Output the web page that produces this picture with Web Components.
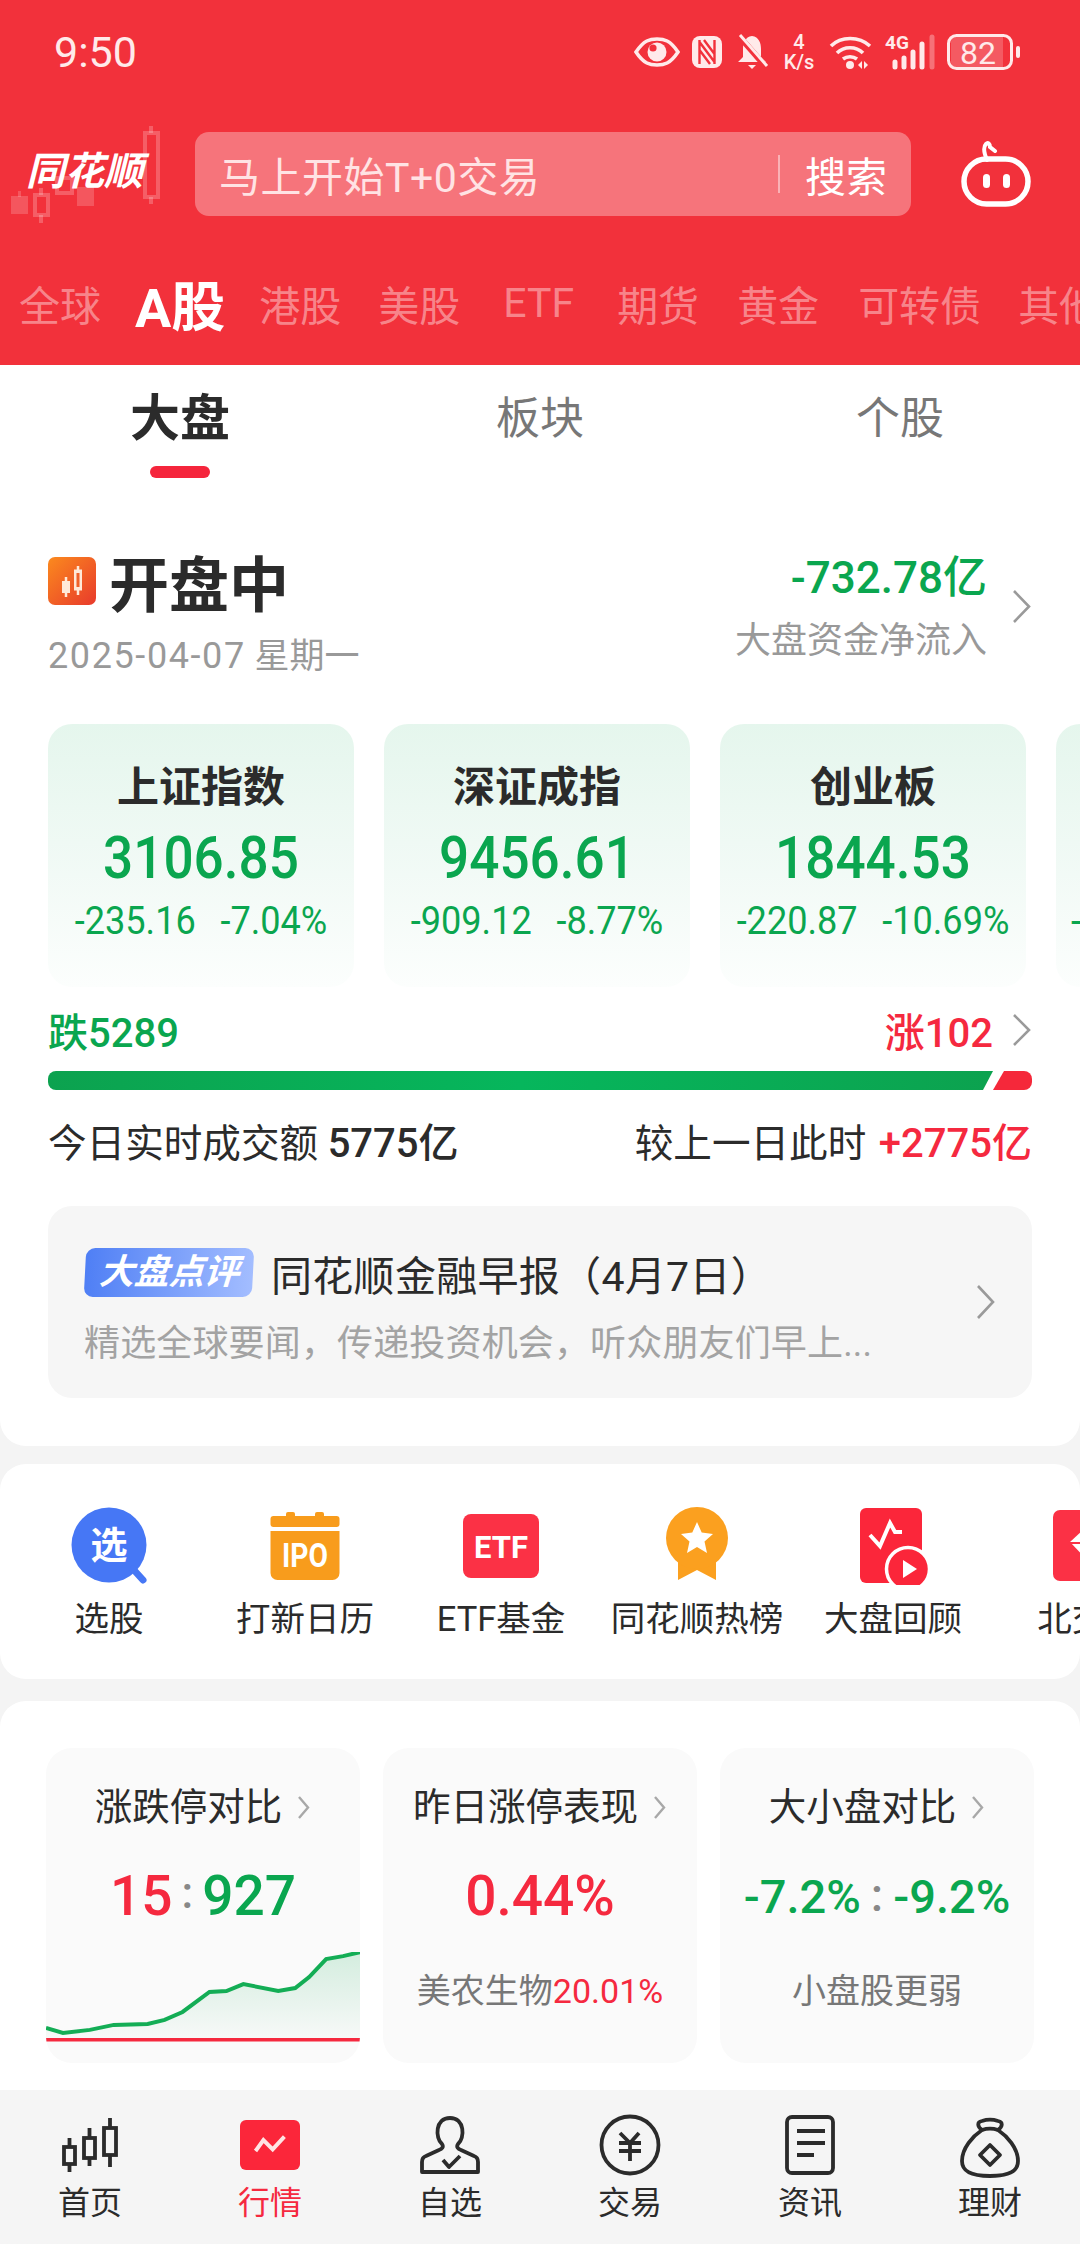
<!DOCTYPE html>
<html lang="zh">
<head>
<meta charset="utf-8">
<title>行情</title>
<style>
  html, body { margin: 0; padding: 0; }
  body {
    width: 1080px;
    height: 2244px;
    overflow: hidden;
    background: #f4f4f4;
    font-family: Roboto, "Noto Sans CJK SC", sans-serif;
    color: #2b2b2b;
    display: flex;
    flex-direction: column;
  }
  #gap1 { height: 18px; flex: none; }
  #gap2 { height: 22px; flex: none; }
</style>
</head>
<body>
  <ths-header></ths-header>
  <ths-panel style="--radius: 0 0 26px 26px; --pad: 0 48px 48px">
    <ths-seg-tabs></ths-seg-tabs>
    <ths-market-head></ths-market-head>
    <ths-index-row>
      <ths-index-card name="上证指数" value="3106.85" change="-235.16" pct="-7.04%"></ths-index-card>
      <ths-index-card name="深证成指" value="9456.61" change="-909.12" pct="-8.77%"></ths-index-card>
      <ths-index-card name="创业板" value="1844.53" change="-220.87" pct="-10.69%"></ths-index-card>
      <ths-index-card change="-" clipped></ths-index-card>
    </ths-index-row>
    <ths-breadth></ths-breadth>
    <ths-news-card></ths-news-card>
  </ths-panel>
  <div id="gap1"></div>
  <ths-panel style="--radius: 26px; --pad: 41px 0 38px">
    <ths-shortcuts></ths-shortcuts>
  </ths-panel>
  <div id="gap2"></div>
  <ths-panel style="--radius: 26px 26px 0 0; --pad: 47px 46px 0; --grow: 1">
    <ths-stat-row>
      <ths-stat-card label="涨跌停对比" chart>
        <span slot="value" style="color:#f5293f">15</span>
        <span slot="value" style="color:#888;font-size:44px;margin:0 9px 6px">:</span>
        <span slot="value" style="color:#0aa64f">927</span>
      </ths-stat-card>
      <ths-stat-card label="昨日涨停表现">
        <span slot="value" style="color:#f5293f">0.44%</span>
        <span slot="sub">美农生物<span style="color:#f5293f">20.01%</span></span>
      </ths-stat-card>
      <ths-stat-card label="大小盘对比" small>
        <span slot="value" style="color:#0aa64f">-7.2%</span>
        <span slot="value" style="color:#888;margin:0 10px 4px">:</span>
        <span slot="value" style="color:#0aa64f">-9.2%</span>
        <span slot="sub">小盘股更弱</span>
      </ths-stat-card>
    </ths-stat-row>
  </ths-panel>
  <ths-bottom-nav></ths-bottom-nav>

<script>
const RED = '#f5293f';
const GREEN = '#0aa64f';

function chevron(w, h, color = '#9a9a9a', sw = 2.6) {
  return `<svg width="${w}" height="${h}" viewBox="0 0 ${w} ${h}" style="display:block;flex:none" fill="none">
    <path d="M2 2 L${w - 3} ${h / 2} L2 ${h - 2}" stroke="${color}" stroke-width="${sw}"/></svg>`;
}

class ThsHeader extends HTMLElement {
  constructor() {
    super();
    this.attachShadow({ mode: 'open' });
    const ink = '#ffeaea';
    this.shadowRoot.innerHTML = `
    <style>
      :host { display: block; flex: none; height: 365px; background: #f2313b; color: #fff; overflow: hidden; }
      .status { height: 104px; display: flex; align-items: center; padding: 0 60px 0 54px; }
      .time { font-size: 43px; color: #ffeaea; flex: 1; }
      .icons { display: flex; align-items: center; }
      .icons svg { display: block; flex: none; overflow: visible; }
      .top { height: 111px; margin-top: 14px; display: flex; align-items: center; }
      .logo { width: 195px; height: 111px; position: relative; flex: none; }
      .logo svg { position: absolute; left: 0; top: 0; }
      .logo b {
        position: absolute; left: 26px; top: 29px; font-size: 39px; line-height: 50px;
        font-style: italic; font-weight: 700; white-space: nowrap; color: #fff;
      }
      .search {
        width: 716px; height: 84px; border-radius: 14px; background: rgba(255,255,255,.33);
        display: flex; align-items: center; padding: 0 24px; box-sizing: border-box; font-size: 41px; flex: none;
      }
      .hint { flex: 1; color: #ffe3e4; white-space: nowrap; letter-spacing: .5px; }
      .bar { width: 2px; height: 38px; background: rgba(255,255,255,.45); margin-right: 25px; }
      .go { color: #fff; white-space: nowrap; }
      .robot { margin-left: 50px; flex: none; display: block; }
      .tabs { display: flex; align-items: center; height: 86px; margin-top: 31px; font-size: 41px; color: rgba(255,255,255,.42); white-space: nowrap; }
      .tabs span { flex: none; }
      .tabs .on { color: #fff; font-weight: 700; font-size: 54px; }
    </style>
    <div class="status">
      <div class="time">9:50</div>
      <div class="icons">
        <svg width="46" height="30" viewBox="0 0 46 30" style="margin-right:12px">
          <path d="M2 15 C10 3 16 2 23 2 C30 2 36 3 44 15 C36 27 30 28 23 28 C16 28 10 27 2 15Z" fill="none" stroke="${ink}" stroke-width="3.6"/>
          <circle cx="23" cy="15" r="9.5" fill="${ink}"/>
          <circle cx="19" cy="11" r="3.6" fill="#f2313b"/>
        </svg>
        <svg width="30" height="32" viewBox="0 0 30 32" style="margin-right:14px">
          <rect width="30" height="32" rx="8" fill="${ink}"/>
          <path d="M7.5 4 V28 M22.5 4 V28 M7.5 6 L22.5 26 M7.5 14 L18 28 M12 4 L22.5 18" stroke="#f2313b" stroke-width="2.4" fill="none"/>
        </svg>
        <svg width="32" height="36" viewBox="0 0 32 36" style="margin-right:14px">
          <path d="M16 2 C23 3 25 9 25 15 V23 L30 28 H2 L7 23 V15 C7 9 9 3 16 2Z" fill="${ink}"/>
          <path d="M12 31 H20 L16 35Z" fill="${ink}"/>
          <path d="M3 2 L30 33" stroke="#f2313b" stroke-width="6"/>
          <path d="M4 1 L31 32" stroke="${ink}" stroke-width="3"/>
        </svg>
        <svg width="34" height="38" viewBox="0 0 34 38" style="margin-right:13px">
          <text x="17" y="16" text-anchor="middle" font-size="20" font-weight="500" font-family="Roboto" fill="${ink}">4</text>
          <text x="17" y="36" text-anchor="middle" font-size="20" font-weight="500" font-family="Roboto" fill="${ink}">K/s</text>
        </svg>
        <svg width="44" height="34" viewBox="0 0 44 34" style="margin-right:12px">
          <g fill="none" stroke="${ink}" stroke-width="3.6">
            <path d="M2 11 C12 1 30 1 41 11"/>
            <path d="M8 18 C15 11 27 11 34 18"/>
            <path d="M14 24 C18 21 24 21 28 24"/>
          </g>
          <circle cx="21" cy="30" r="4" fill="${ink}"/>
          <path d="M33 26 V34 L29 30Z M35 26 V34 L39 30Z" fill="${ink}"/>
        </svg>
        <svg width="50" height="36" viewBox="0 0 50 36" style="margin-right:12px">
          <text x="0" y="15" font-size="19" font-weight="700" font-family="Roboto" fill="${ink}">4G</text>
          <g stroke="${ink}" stroke-width="5" stroke-linecap="round">
            <path d="M10 28 V33 M19 24 V33 M28 18 V33 M37 10 V33"/>
            <path d="M47 3 V33" stroke-opacity=".35"/>
          </g>
        </svg>
        <svg width="73" height="36" viewBox="0 0 73 36">
          <rect x="1.5" y="1.5" width="63" height="33" rx="8" fill="none" stroke="${ink}" stroke-width="3"/>
          <path d="M4 8 a5 5 0 0 1 5 -5 H56 V33 H9 a5 5 0 0 1 -5 -5Z" fill="#fff" fill-opacity=".2"/>
          <text x="31" y="29.500" text-anchor="middle" font-size="32" font-family="Roboto" fill="${ink}">82</text>
          <rect x="69" y="12" width="4" height="12" rx="2" fill="${ink}"/>
        </svg>
      </div>
    </div>
    <div class="top">
      <div class="logo">
        <svg width="195" height="111" viewBox="0 0 195 111" fill="none">
          <g stroke="#fff" stroke-opacity=".22" stroke-width="4">
            <rect x="145" y="15" width="13" height="64"/>
            <path d="M151 8 V15 M151 79 V86"/>
            <rect x="35" y="77" width="13" height="20"/>
            <path d="M41 70 V77 M41 97 V105"/>
            <rect x="57" y="60" width="15" height="15"/>
          </g>
          <g fill="#fff" fill-opacity=".18">
            <rect x="11" y="78" width="17" height="18"/>
            <rect x="18" y="73" width="3" height="6"/>
            <rect x="77" y="69" width="17" height="19"/>
          </g>
        </svg>
        <b>同花顺</b>
      </div>
      <div class="search">
        <span class="hint">马上开始T+0交易</span>
        <span class="bar"></span>
        <span class="go">搜索</span>
      </div>
      <svg class="robot" width="70" height="66" viewBox="0 0 70 66" fill="none">
        <path d="M26 19 C23 12 22 6 25 3 C27 1 29 3 29 6 L34 10" stroke="#fff" stroke-width="4" stroke-linecap="round"/>
        <rect x="3" y="18" width="64" height="45" rx="22.5" stroke="#fff" stroke-width="5.5"/>
        <rect x="22" y="33" width="7" height="14" rx="3.5" fill="#fff"/>
        <rect x="42" y="33" width="7" height="14" rx="3.5" fill="#fff"/>
      </svg>
    </div>
    <div class="tabs">
      <span style="margin-left:19px">全球</span>
      <span class="on" style="margin-left:34px">A股</span>
      <span style="margin-left:34px">港股</span>
      <span style="margin-left:37px">美股</span>
      <span style="margin-left:43px">ETF</span>
      <span style="margin-left:43px">期货</span>
      <span style="margin-left:38px">黄金</span>
      <span style="margin-left:39px">可转债</span>
      <span style="margin-left:37px">其他</span>
    </div>`;
  }
}
customElements.define('ths-header', ThsHeader);

class ThsPanel extends HTMLElement {
  constructor() {
    super();
    this.attachShadow({ mode: 'open' });
    this.shadowRoot.innerHTML = `
    <style>
      :host {
        display: block; background: #fff; border-radius: var(--radius, 0);
        padding: var(--pad, 0); flex: var(--grow, 0) 0 auto; min-height: 0; overflow: hidden;
      }
    </style><slot></slot>`;
  }
}
customElements.define('ths-panel', ThsPanel);

class ThsSegTabs extends HTMLElement {
  constructor() {
    super();
    this.attachShadow({ mode: 'open' });
    this.shadowRoot.innerHTML = `
    <style>
      :host { display: flex; margin: 0 -48px; height: 130px; }
      div { flex: 1; text-align: center; font-size: 44px; line-height: 62px; padding-top: 23px; color: #777; }
      .on { color: #2b2b2b; font-weight: 700; font-size: 50px; }
      .on::after {
        content: ""; display: block; width: 60px; height: 12px; border-radius: 6px;
        background: #f5253c; margin: 16px auto 0;
      }
    </style>
    <div class="on">大盘</div><div>板块</div><div>个股</div>`;
  }
}
customElements.define('ths-seg-tabs', ThsSegTabs);

class ThsMarketHead extends HTMLElement {
  constructor() {
    super();
    this.attachShadow({ mode: 'open' });
    this.shadowRoot.innerHTML = `
    <style>
      :host { display: flex; align-items: center; margin-top: 50px; height: 135px; }
      .left { flex: 1; }
      .title { display: flex; align-items: center; height: 80px; gap: 13px; font-size: 60px; font-weight: 700; color: #2b2b2b; }
      .date { font-size: 35px; line-height: 56px; margin-top: 7px; color: #999; white-space: nowrap; }
      .date span { font-size: 36px; letter-spacing: 1.6px; }
      .right { text-align: right; margin-right: 25px; margin-top: -6px; }
      .flow { font-size: 44px; line-height: 62px; font-weight: 500; color: ${GREEN}; white-space: nowrap; }
      .desc { font-size: 36px; line-height: 64px; color: #999; }
      .chev { margin-top: -12px; }
    </style>
    <div class="left">
      <div class="title">
        <svg width="48" height="48" viewBox="0 0 48 48" style="flex:none">
          <defs><linearGradient id="g" x1="0" y1="0" x2="1" y2="1"><stop offset="0" stop-color="#fb8a1e"/><stop offset="1" stop-color="#e83a2c"/></linearGradient></defs>
          <rect width="48" height="48" rx="7" fill="url(#g)"/>
          <path d="M18 20 V40 M30 9 V38" stroke="#ffe9d8" stroke-width="2.5"/>
          <rect x="14" y="24" width="8" height="12" fill="#ffe9d8"/>
          <rect x="26.5" y="13" width="7" height="20" fill="#ffe9d8" stroke="#ffe9d8" stroke-width="1"/>
          <rect x="28.5" y="16" width="3" height="14" fill="#f0622a"/>
        </svg>
        开盘中
      </div>
      <div class="date"><span>2025-04-07</span> 星期一</div>
    </div>
    <div class="right">
      <div class="flow">-732.78亿</div>
      <div class="desc">大盘资金净流入</div>
    </div>
    <div class="chev">${chevron(20, 35)}</div>`;
  }
}
customElements.define('ths-market-head', ThsMarketHead);

class ThsIndexRow extends HTMLElement {
  constructor() {
    super();
    this.attachShadow({ mode: 'open' });
    this.shadowRoot.innerHTML = `
    <style>
      :host { display: flex; gap: 30px; margin: 44px -48px 0 0; overflow: hidden; }
    </style><slot></slot>`;
  }
}
customElements.define('ths-index-row', ThsIndexRow);

class ThsIndexCard extends HTMLElement {
  connectedCallback() {
    if (this.shadowRoot) return;
    this.attachShadow({ mode: 'open' });
    const a = n => this.getAttribute(n) || '';
    const clipped = this.hasAttribute('clipped');
    this.shadowRoot.innerHTML = `
    <style>
      :host {
        display: block; flex: none; width: 306px; height: 263px; box-sizing: border-box; padding-top: 39px;
        border-radius: 24px; text-align: center; color: ${GREEN};
        background: linear-gradient(180deg, #e5f6ed 0%, #eff9f4 45%, #fcfefd 100%);
      }
      .name { font-size: 42px; line-height: 50px; font-weight: 700; color: #2b2b2b; height: 50px; }
      .value { font-size: 60px; line-height: 70px; height: 70px; margin-top: 10px; font-weight: 500; transform: scaleX(.885); }
      .sub {
        display: flex; justify-content: center; gap: 26px; font-size: 38px; line-height: 44px; margin-top: 6px;
        white-space: nowrap; transform: scaleX(.95);
      }
      .sub.left { justify-content: flex-start; padding-left: 15px; transform: none; }
    </style>
    <div class="name">${a('name')}</div>
    <div class="value">${a('value')}</div>
    <div class="sub ${clipped ? 'left' : ''}"><span>${a('change')}</span>${a('pct') ? `<span>${a('pct')}</span>` : ''}</div>`;
  }
}
customElements.define('ths-index-card', ThsIndexCard);

class ThsBreadth extends HTMLElement {
  constructor() {
    super();
    this.attachShadow({ mode: 'open' });
    this.shadowRoot.innerHTML = `
    <style>
      :host { display: block; margin-top: 15px; }
      .counts { display: flex; align-items: center; height: 56px; font-size: 40px; font-weight: 500; }
      .down { flex: 1; color: ${GREEN}; }
      .up { color: ${RED}; margin-right: 19px; }
      .bar { display: flex; height: 19px; margin-top: 13px; }
      .g {
        flex: none; width: 945px; border-radius: 8px 0 0 8px;
        background: linear-gradient(90deg, #0ca24f, #06b65c 50%, #0ca24f);
        clip-path: polygon(0 0, 100% 0, calc(100% - 10px) 100%, 0 100%);
      }
      .r {
        flex: 1; border-radius: 0 8px 8px 0; background: #f5283a;
        clip-path: polygon(11px 0, 100% 0, 100% 100%, 0 100%);
      }
      .amount { display: flex; justify-content: space-between; font-size: 38.6px; line-height: 56px; margin-top: 26px; color: #2b2b2b; white-space: nowrap; }
      .amount b { font-weight: 500; font-size: 40px; }
      .amount .plus { color: ${RED}; margin-left: 3px; }
    </style>
    <div class="counts"><span class="down">跌5289</span><span class="up">涨102</span>${chevron(20, 34)}</div>
    <div class="bar"><div class="g"></div><div class="r"></div></div>
    <div class="amount">
      <span>今日实时成交额 <b>5775亿</b></span>
      <span>较上一日此时 <b class="plus">+2775亿</b></span>
    </div>`;
  }
}
customElements.define('ths-breadth', ThsBreadth);

class ThsNewsCard extends HTMLElement {
  constructor() {
    super();
    this.attachShadow({ mode: 'open' });
    this.shadowRoot.innerHTML = `
    <style>
      :host {
        display: flex; align-items: center; height: 192px; margin-top: 34px; padding: 0 36px; box-sizing: border-box;
        background: #f6f6f6; border-radius: 24px;
      }
      .body { flex: 1; min-width: 0; padding-top: 9px; }
      .title { display: flex; align-items: center; height: 56px; gap: 18px; font-size: 41px; letter-spacing: .3px; color: #2b2b2b; white-space: nowrap; }
      .badge {
        flex: none; width: 168px; height: 49px; line-height: 49px; text-align: center; border-radius: 9px;
        background: linear-gradient(90deg, #4f7ff5, #a3bdff); color: #fff; font-size: 35px; font-weight: 700; letter-spacing: 0;
        font-style: italic; transform: skewX(-3deg); margin-left: 1px;
      }
      .sub { font-size: 36px; line-height: 50px; margin-top: 18px; color: #a3a3a3; white-space: nowrap; letter-spacing: .15px; }
    </style>
    <div class="body">
      <div class="title"><span class="badge">大盘点评</span><span>同花顺金融早报（4月7日）</span></div>
      <div class="sub">精选全球要闻，传递投资机会，听众朋友们早上...</div>
    </div>
    ${chevron(20, 36)}`;
  }
}
customElements.define('ths-news-card', ThsNewsCard);

const SHORTCUTS = [
  ['选股', `<circle cx="40" cy="40" r="37.5" fill="#4677f5"/><path d="M64 64 L74 75" stroke="#4677f5" stroke-width="7" stroke-linecap="round"/>
    <text x="40" y="54" text-anchor="middle" font-size="37" font-weight="700" font-family="Noto Sans CJK SC" fill="#fff">选</text>`],
  ['打新日历', `<rect x="21" y="7" width="9" height="6" rx="2" fill="#f89c1c"/><rect x="50" y="7" width="9" height="6" rx="2" fill="#f89c1c"/>
    <rect x="5.5" y="11" width="69" height="11" rx="3" fill="#f89c1c"/>
    <path d="M5.500 26 H74.500 V68 a7 7 0 0 1 -7 7 H12.500 a7 7 0 0 1 -7 -7Z" fill="#f89c1c"/>
    <text x="17" y="62" font-size="33" font-weight="700" font-family="Roboto" fill="#fff" textLength="46" lengthAdjust="spacingAndGlyphs">IPO</text>`],
  ['ETF基金', `<rect x="2" y="9" width="76" height="64" rx="8" fill="#fb3145"/>
    <text x="13" y="53" font-size="31" font-weight="700" font-family="Roboto" fill="#fff" textLength="54" lengthAdjust="spacingAndGlyphs">ETF</text>`],
  ['同花顺热榜', `<path d="M21 50 H59 V75 L40 65 L21 75Z" fill="#fba01f"/><circle cx="40" cy="33" r="31" fill="#fba01f"/>
    <path d="M40 17 L44.700 27.500 L56 29 L47.500 36.500 L50 48 L40 42 L30 48 L32.500 36.500 L24 29 L35.300 27.500Z" fill="#fff"/>`],
  ['大盘回顾', `<rect x="7" y="3" width="62" height="75" rx="6" fill="#fb263a"/>
    <path d="M17 30 L27 41 L37 18 L42 27 H49" fill="none" stroke="#fff" stroke-width="4"/>
    <circle cx="55" cy="64" r="21.500" fill="#fb263a" stroke="#fff" stroke-width="3.500"/>
    <path d="M50 55 L64 64 L50 73Z" fill="#fff"/>`],
  ['北交所', `<rect x="4" y="5" width="72" height="71" rx="7" fill="#fb3145"/>
    <path d="M21 37 L35 24 H55 L68 37 L45 62Z" fill="#fff"/><path d="M21 38 H68" stroke="#fb3145" stroke-width="2"/>`],
];

class ThsShortcuts extends HTMLElement {
  constructor() {
    super();
    this.attachShadow({ mode: 'open' });
    this.shadowRoot.innerHTML = `
    <style>
      :host { display: flex; padding-left: 11px; width: 1200px; }
      .item { flex: none; width: 196px; text-align: center; font-size: 34.5px; line-height: 44px; color: #2b2b2b; white-space: nowrap; }
      svg { display: block; margin: 0 auto 12px; }
    </style>
    ${SHORTCUTS.map(([label, art]) => `<div class="item"><svg width="80" height="80" viewBox="0 0 80 80">${art}</svg>${label}</div>`).join('')}`;
  }
}
customElements.define('ths-shortcuts', ThsShortcuts);

class ThsStatRow extends HTMLElement {
  constructor() {
    super();
    this.attachShadow({ mode: 'open' });
    this.shadowRoot.innerHTML = `
    <style>:host { display: flex; gap: 23px; }</style><slot></slot>`;
  }
}
customElements.define('ths-stat-row', ThsStatRow);

class ThsStatCard extends HTMLElement {
  connectedCallback() {
    if (this.shadowRoot) return;
    this.attachShadow({ mode: 'open' });
    const hasChart = this.hasAttribute('chart');
    const pts = '0,0 17,5 44,2 68,-3 102,-4 119,-8 137,-16 164,-36 181,-37 198,-44 233,-37 250,-40 264,-51 281,-69 298,-72 315,-76';
    const line = pts.split(' ').map(p => { const [x, y] = p.split(','); return `${x},${+y + 76}`; }).join(' ');
    const chart = hasChart ? `
      <svg class="chart" width="314" height="93" viewBox="0 0 315 93" fill="none">
        <defs><linearGradient id="f" x1="0" y1="0" x2="0" y2="1"><stop offset="0" stop-color="${GREEN}" stop-opacity=".16"/><stop offset="1" stop-color="${GREEN}" stop-opacity=".01"/></linearGradient></defs>
        <polygon points="${line} 315,88 0,88" fill="url(#f)"/>
        <polyline points="${line}" stroke="#13ad55" stroke-width="4"/>
        <path d="M0 88 H315" stroke="#f5293f" stroke-width="3.500"/>
      </svg>` : `<div class="sub"><slot name="sub"></slot></div>`;
    this.shadowRoot.innerHTML = `
    <style>
      :host {
        display: block; flex: none; width: 314px; height: 315px; box-sizing: border-box; padding-top: 39px;
        border-radius: 26px; background: #fafafa; overflow: hidden; text-align: center;
      }
      .label { display: flex; justify-content: center; align-items: center; gap: 15px; font-size: 37.5px; line-height: 40px; color: #2b2b2b; white-space: nowrap; }
      .value {
        display: flex; justify-content: center; align-items: center; height: 70px; margin-top: 34px;
        font-size: ${this.hasAttribute('small') ? 47 : 55}px; font-weight: 500; white-space: nowrap;
      }
      .sub { font-size: 34px; line-height: 44px; margin-top: 38px; color: #777; white-space: nowrap; }
      .chart { display: block; margin-top: 21px; }
    </style>
    <div class="label">${this.getAttribute('label')}${chevron(14, 25, '#a8a8a8', 2.4)}</div>
    <div class="value"><slot name="value"></slot></div>
    ${chart}`;
  }
}
customElements.define('ths-stat-card', ThsStatCard);

class ThsBottomNav extends HTMLElement {
  constructor() {
    super();
    this.attachShadow({ mode: 'open' });
    const s = 'fill="none" stroke="#2b2b2b" stroke-width="3.8"';
    const items = [
      ['首页', `<g ${s}><path d="M9.500 24 V58 M29.500 14 V52 M50 4 V53"/>
        <rect x="4" y="33" width="11" height="17" fill="#f5f5f5"/><rect x="24" y="24" width="11" height="20" fill="#f5f5f5"/><rect x="44" y="14" width="12" height="27" fill="#f5f5f5"/></g>`],
      ['行情', `<rect x="0" y="6" width="60" height="50" rx="6" fill="#fb263a"/>
        <path d="M15.500 37 L23.400 26 L32.700 35.300 L44.400 22.700" fill="none" stroke="#ffe4e4" stroke-width="4"/>`],
      ['自选', `<g ${s} stroke-linejoin="round"><path d="M22 30 C15 24 15 4 30 4 C45 4 45 24 38 30 C36 33 38 35 41 36 L54 42 C57 43 58 45 58 48 V58 H2 V48 C2 45 3 43 6 42 L19 36 C22 35 24 33 22 30Z"/>
        <path d="M23 46 L29 53 L40 42"/></g>`],
      ['交易', `<circle cx="30" cy="31" r="28.500" ${s}/><g ${s}><path d="M20 19 L30 29 L39 19 M19 29 H41 M19 37 H41 M30 29 V47"/></g>`],
      ['资讯', `<rect x="7" y="3" width="46" height="56" rx="5" ${s}/><g ${s}><path d="M17 17 H45 M17 29 H45 M17 41 H34"/></g>`],
      ['理财', `<g ${s} stroke-linejoin="round" transform="translate(0 1)"><path d="M22 15 C17 11 17 7 22 6 C28 4 32 4 38 6 C43 7 43 11 38 15 C47 21 58 33 58 46 C58 56 50 61 30 61 C10 61 2 56 2 46 C2 33 13 21 22 15Z"/>
        <path d="M22 15 C28 13 32 13 38 15"/><path d="M30 30 L40 40 L30 50 L20 40Z"/></g>`],
    ];
    this.shadowRoot.innerHTML = `
    <style>
      :host { display: grid; grid-template-columns: repeat(6, 180px); flex: none; height: 154px; background: #f5f5f5; overflow: hidden; }
      .tab { text-align: center; font-size: 32px; line-height: 40px; color: #2b2b2b; padding-top: 24px; }
      .tab svg { display: block; margin: 0 auto 7px; overflow: visible; }
      .on { color: ${RED}; }
    </style>
    ${items.map(([label, art], i) => `<div class="tab ${i === 1 ? 'on' : ''}"><svg width="60" height="62" viewBox="0 0 60 62">${art}</svg>${label}</div>`).join('')}`;
  }
}
customElements.define('ths-bottom-nav', ThsBottomNav);
</script>
</body>
</html>
